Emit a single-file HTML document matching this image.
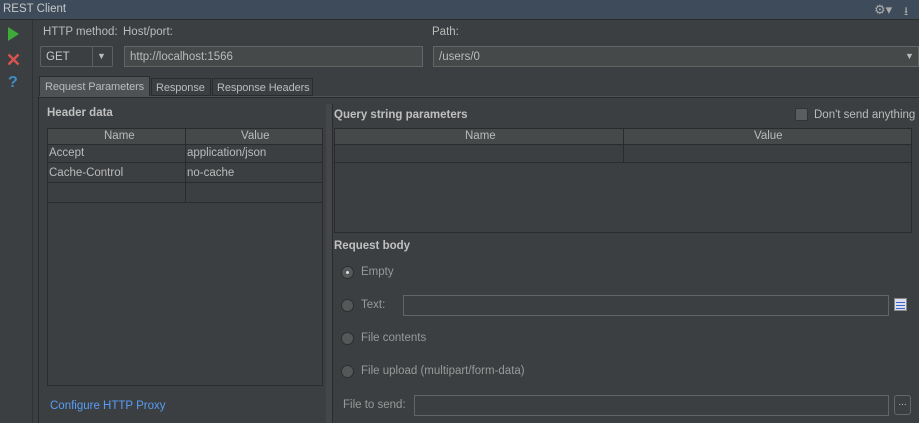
<!DOCTYPE html>
<html><head><style>
*{margin:0;padding:0;box-sizing:border-box}
body{width:919px;height:423px;background:#3c3f41;font-family:"Liberation Sans","DejaVu Sans",sans-serif;font-size:11.5px;color:#bbbbbb;position:relative;overflow:hidden}
.a{position:absolute;white-space:nowrap}
.inp{position:absolute;background:#45494a;border:1px solid #646464}
.b{font-weight:bold;color:#c0c0c0}
.tb{position:absolute;border:1px solid #2b2b2b;background:#3c3f41}
.hdr{position:absolute;background:#45494a;border-bottom:1px solid #2b2b2b;height:16px}
.radio{position:absolute;width:13px;height:13px;border-radius:50%;background:#555859;border:1px solid #2e2e2e}
.tab{font-size:11px;letter-spacing:-0.1px}
</style></head><body>
<div class="a" style="left:0;top:0;width:919px;height:20px;background:#3e4b5b;border-bottom:1px solid #2b2b2b"></div>
<div class="a" style="left:3px;top:3px;color:#c8c8c8">REST Client</div>
<div class="a" style="left:874px;top:2px;color:#aaa;font-size:13px">⚙▾</div>
<div class="a" style="left:904px;top:2px;color:#aaa;font-size:12px">⭳</div>
<div class="a" style="left:32px;top:20px;width:1px;height:403px;background:#2f3133"></div>
<svg class="a" style="left:7px;top:27px" width="14" height="14"><path d="M1 0L12 7L1 14Z" fill="#3daa3a"/></svg>
<svg class="a" style="left:7px;top:53px" width="13" height="13"><path d="M1.5 1.5L11.5 11.5M11.5 1.5L1.5 11.5" stroke="#d9534f" stroke-width="2.5"/></svg>
<div class="a" style="left:8px;top:74px;color:#3f8dc8;font-weight:bold;font-size:16px">?</div>
<div class="a" style="left:43px;top:26px">HTTP method:</div>
<div class="a" style="left:123px;top:26px">Host/port:</div>
<div class="a" style="left:432px;top:26px">Path:</div>
<div class="a" style="left:40px;top:46px;width:73px;height:21px;border:1px solid #5e6060;border-radius:2px;background:#3c3f41"></div>
<div class="a" style="left:92px;top:46px;width:1px;height:21px;background:#5e6060"></div>
<div class="a" style="left:46px;top:51px;color:#c8c8c8">GET</div>
<div class="a" style="left:97px;top:51px;font-size:9px">▼</div>
<div class="inp" style="left:124px;top:46px;width:299px;height:21px"></div>
<div class="a" style="left:130px;top:51px">http://localhost:1566</div>
<div class="inp" style="left:433px;top:46px;width:486px;height:21px"></div>
<div class="a" style="left:439px;top:51px">/users/0</div>
<div class="a" style="left:905px;top:51px;font-size:9px">▼</div>
<!-- tabs -->
<div class="a" style="left:38px;top:96px;width:881px;height:327px;border-left:1px solid #2b2b2b"></div>
<div class="a tab" style="left:39px;top:76px;width:111px;height:20px;background:#4e5254;border:1px solid #2b2b2b;border-bottom:none;color:#bbb;padding:4px 0 0 5px">Request Parameters</div>
<div class="a tab" style="left:151px;top:78px;width:60px;height:18px;border:1px solid #2b2b2b;padding:3px 0 0 4px">Response</div>
<div class="a tab" style="left:212px;top:78px;width:101px;height:18px;border:1px solid #2b2b2b;padding:3px 0 0 4px">Response Headers</div>
<div class="a" style="left:39px;top:96px;width:880px;height:2px;background:#4e5254;border-bottom:1px solid #2b2b2b"></div>
<!-- left -->
<div class="a b" style="left:47px;top:107px">Header data</div>
<div class="tb" style="left:47px;top:128px;width:276px;height:258px"></div>
<div class="hdr" style="left:48px;top:129px;width:274px"></div>
<div class="a" style="left:185px;top:129px;width:1px;height:73px;background:#2b2b2b"></div>
<div class="a" style="left:104px;top:130px">Name</div>
<div class="a" style="left:241px;top:130px">Value</div>
<div class="a" style="left:48px;top:162px;width:274px;height:1px;background:#2b2b2b"></div>
<div class="a" style="left:48px;top:182px;width:274px;height:1px;background:#2b2b2b"></div>
<div class="a" style="left:48px;top:202px;width:274px;height:1px;background:#2b2b2b"></div>
<div class="a" style="left:49px;top:147px">Accept</div>
<div class="a" style="left:187px;top:147px">application/json</div>
<div class="a" style="left:49px;top:167px">Cache-Control</div>
<div class="a" style="left:187px;top:167px">no-cache</div>
<div class="a" style="left:50px;top:400px;color:#589df6">Configure HTTP Proxy</div>
<!-- splitter -->
<div class="a" style="left:326px;top:104px;width:6px;height:319px;background-image:radial-gradient(#5a5d60 0.5px,transparent 0.7px);background-size:2px 2px"></div>
<div class="a" style="left:332px;top:104px;width:1px;height:319px;background:#2b2b2b"></div>
<!-- right -->
<div class="a b" style="left:334px;top:109px">Query string parameters</div>
<div class="a" style="left:795px;top:108px;width:13px;height:13px;background:#5a5d5f;border:1px solid #333;border-radius:2px"></div>
<div class="a" style="left:814px;top:109px">Don't send anything</div>
<div class="tb" style="left:334px;top:128px;width:578px;height:105px"></div>
<div class="hdr" style="left:335px;top:129px;width:576px"></div>
<div class="a" style="left:623px;top:129px;width:1px;height:33px;background:#2b2b2b"></div>
<div class="a" style="left:465px;top:130px">Name</div>
<div class="a" style="left:754px;top:130px">Value</div>
<div class="a" style="left:335px;top:162px;width:576px;height:1px;background:#2b2b2b"></div>
<div class="a b" style="left:334px;top:240px">Request body</div>
<div class="radio" style="left:341px;top:266px"><div class="a" style="left:4px;top:4px;width:3px;height:3px;background:#ddd;border-radius:50%"></div></div>
<div class="a" style="left:361px;top:266px;color:#999">Empty</div>
<div class="radio" style="left:341px;top:299px"></div>
<div class="a" style="left:361px;top:299px;color:#999">Text:</div>
<div class="inp" style="left:403px;top:295px;width:486px;height:21px;background:#3c3f41"></div>
<div class="a" style="left:894px;top:298px;width:13px;height:13px;background:#dde;border:1px solid #888"><div style="margin:3px 1px;height:1px;background:#3566c8;box-shadow:0 3px #3566c8,0 6px #3566c8"></div></div>
<div class="radio" style="left:341px;top:332px"></div>
<div class="a" style="left:361px;top:332px;color:#999">File contents</div>
<div class="radio" style="left:341px;top:365px"></div>
<div class="a" style="left:361px;top:365px;color:#999">File upload (multipart/form-data)</div>
<div class="a" style="left:343px;top:399px;color:#999">File to send:</div>
<div class="inp" style="left:414px;top:395px;width:475px;height:21px;background:#3c3f41"></div>
<div class="a" style="left:894px;top:395px;width:17px;height:20px;border:1px solid #666;border-radius:3px;text-align:center;line-height:14px;font-size:10px">...</div>
</body></html>
